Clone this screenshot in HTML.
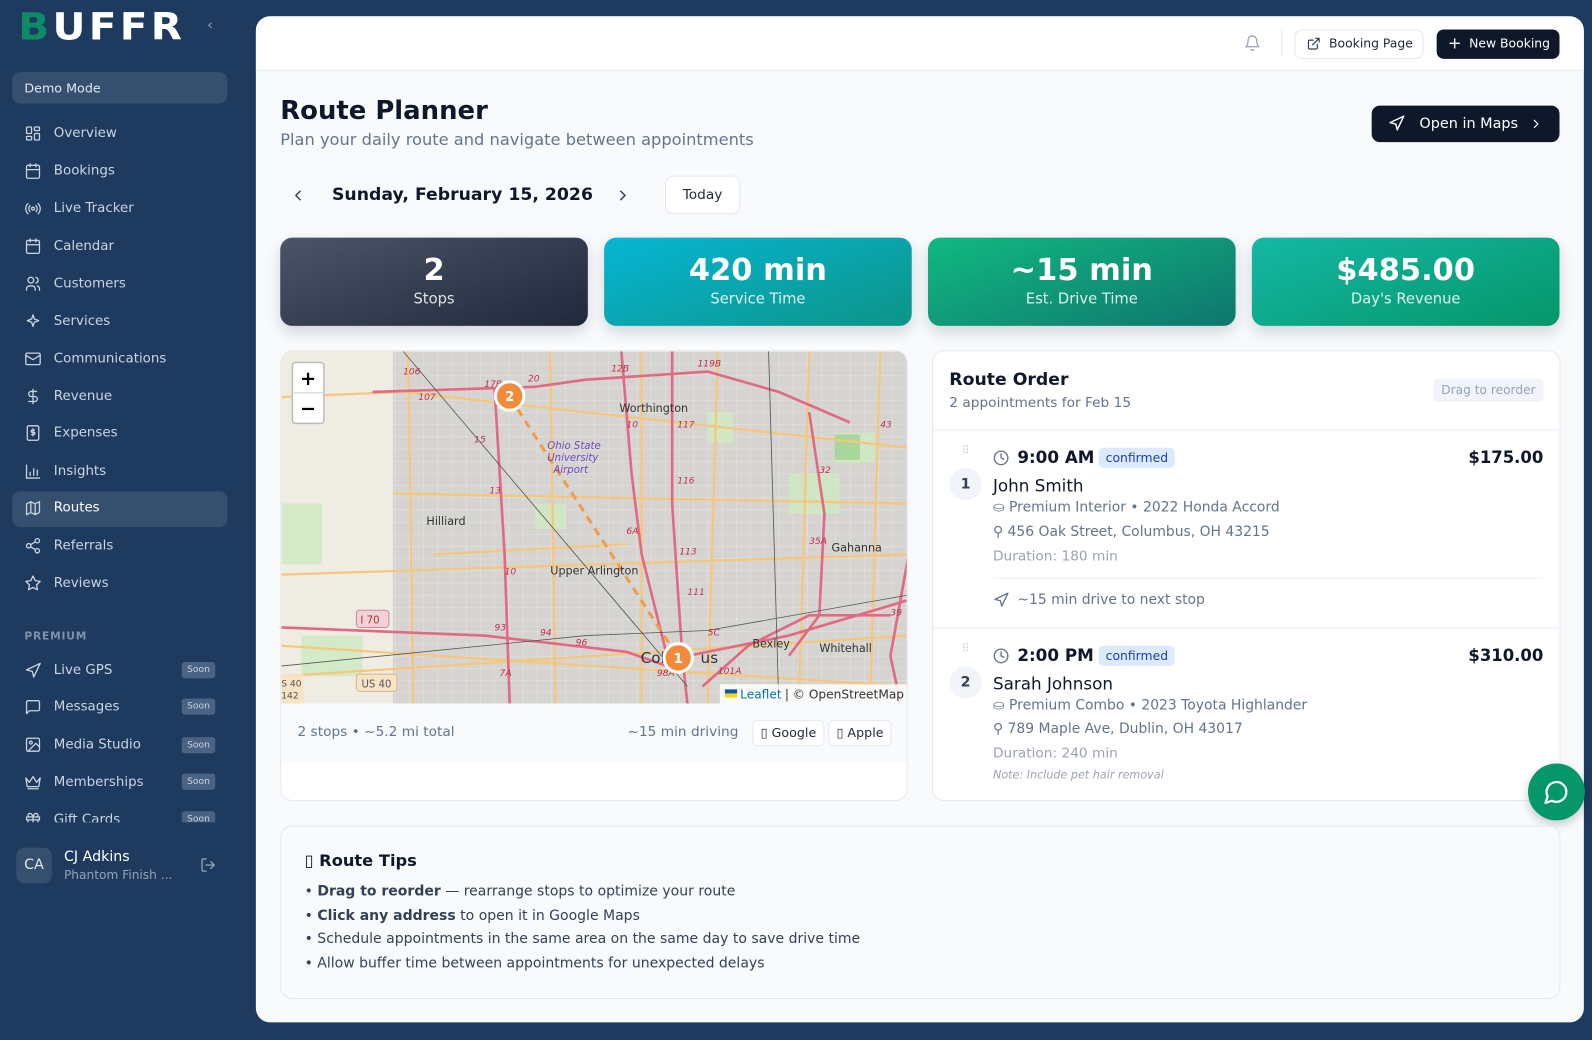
<!DOCTYPE html>
<html><head><meta charset="utf-8"><style>
*{box-sizing:border-box;margin:0;padding:0}
html,body{width:1592px;height:1039px;overflow:hidden;background:#1f3a5f}
body{font-family:"DejaVu Sans","Liberation Sans",sans-serif;}
#root{position:absolute;left:0;top:0;width:1568px;height:1024px;transform:scale(1.0153);transform-origin:0 0;background:#1f3a5f}
.a{position:absolute;white-space:nowrap}
.nav{position:absolute;left:24px;font-size:13.2px;color:#cbd5e1;display:flex;align-items:center}
.nav svg{width:17px;height:17px;margin-right:12px;stroke:#cbd5e1;fill:none;stroke-width:1.8;stroke-linecap:round;stroke-linejoin:round}
.soon{position:absolute;left:179px;width:33px;height:16px;border-radius:3px;background:#4a6283;color:#cbd5e1;font-size:9px;text-align:center;line-height:16px}
.card{position:absolute;border-radius:12px;color:#fff;text-align:center;box-shadow:0 6px 14px rgba(15,23,42,.15)}
.card b{display:block;font-size:30px;margin-top:16px;line-height:34px}
.card span{display:block;font-size:14.5px;opacity:.85;margin-top:3px}
.ico{fill:none;stroke-linecap:round;stroke-linejoin:round}
</style></head><body><div id="root">
<!-- sidebar -->
<div class="a" style="left:18px;top:6px;font-size:37px;font-weight:bold;letter-spacing:3px;transform:scaleX(1.08);transform-origin:0 0;line-height:42px"><span style="color:#0f8a67">B</span><span style="color:#fff">UFFR</span></div>
<div class="a" style="left:204px;top:17px;color:#94a3b8;font-size:14px">‹</div>
<div class="a" style="left:12px;top:71px;width:212px;height:31px;background:#35506f;border-radius:8px;color:#e2e8f0;font-size:12.5px;line-height:31px;padding-left:12px">Demo Mode</div>
<div class="a" style="left:12px;top:484px;width:212px;height:35px;background:#35506f;border-radius:8px"></div>
<div class="nav" style="top:123px"><svg viewBox="0 0 24 24"><rect x="3" y="3" width="7" height="9" rx="1"/><rect x="14" y="3" width="7" height="5" rx="1"/><rect x="14" y="12" width="7" height="9" rx="1"/><rect x="3" y="16" width="7" height="5" rx="1"/></svg>Overview</div>
<div class="nav" style="top:160px"><svg viewBox="0 0 24 24"><rect x="3" y="4" width="18" height="18" rx="2"/><path d="M16 2v4M8 2v4M3 10h18"/></svg>Bookings</div>
<div class="nav" style="top:197px"><svg viewBox="0 0 24 24"><circle cx="12" cy="12" r="2"/><path d="M16.2 7.8a6 6 0 0 1 0 8.4M7.8 16.2a6 6 0 0 1 0-8.4M19.1 4.9a10 10 0 0 1 0 14.2M4.9 19.1a10 10 0 0 1 0-14.2"/></svg>Live Tracker</div>
<div class="nav" style="top:234px"><svg viewBox="0 0 24 24"><rect x="3" y="4" width="18" height="18" rx="2"/><path d="M16 2v4M8 2v4M3 10h18"/></svg>Calendar</div>
<div class="nav" style="top:271px"><svg viewBox="0 0 24 24"><circle cx="9" cy="7" r="4"/><path d="M3 21v-2a4 4 0 0 1 4-4h4a4 4 0 0 1 4 4v2M16 3.1a4 4 0 0 1 0 7.8M21 21v-2a4 4 0 0 0-3-3.9"/></svg>Customers</div>
<div class="nav" style="top:308px"><svg viewBox="0 0 24 24"><path d="M12 3l1.9 5.8L20 11l-6.1 2.2L12 19l-1.9-5.8L4 11l6.1-2.2z"/></svg>Services</div>
<div class="nav" style="top:345px"><svg viewBox="0 0 24 24"><rect x="2" y="4" width="20" height="16" rx="2"/><path d="M22 7l-10 6L2 7"/></svg>Communications</div>
<div class="nav" style="top:382px"><svg viewBox="0 0 24 24"><path d="M12 2v20M17 5H9.5a3.5 3.5 0 0 0 0 7h5a3.5 3.5 0 0 1 0 7H6"/></svg>Revenue</div>
<div class="nav" style="top:418px"><svg viewBox="0 0 24 24"><rect x="4" y="2" width="16" height="20" rx="2"/><path d="M14 8h-3a1.5 1.5 0 0 0 0 3h2a1.5 1.5 0 0 1 0 3h-3M12 6v10"/></svg>Expenses</div>
<div class="nav" style="top:456px"><svg viewBox="0 0 24 24"><path d="M3 3v18h18M8 17v-4M13 17V8M18 17v-7"/></svg>Insights</div>
<div class="nav" style="top:492px;color:#fff"><svg viewBox="0 0 24 24"><path d="M3 6l6-3 6 3 6-3v15l-6 3-6-3-6 3zM9 3v15M15 6v15"/></svg>Routes</div>
<div class="nav" style="top:529px"><svg viewBox="0 0 24 24"><circle cx="18" cy="5" r="3"/><circle cx="6" cy="12" r="3"/><circle cx="18" cy="19" r="3"/><path d="M8.6 13.5l6.8 4M15.4 6.5l-6.8 4"/></svg>Referrals</div>
<div class="nav" style="top:566px"><svg viewBox="0 0 24 24"><path d="M12 2l3.1 6.3 6.9 1-5 4.9 1.2 6.8L12 17.8 5.8 21l1.2-6.8-5-4.9 6.9-1z"/></svg>Reviews</div>
<div class="a" style="left:24px;top:621px;font-size:10.5px;font-weight:bold;color:#7f93ad;letter-spacing:.8px">PREMIUM</div>
<div class="nav" style="top:652px"><svg viewBox="0 0 24 24"><path d="M3 11l19-9-9 19-2-8z"/></svg>Live GPS</div><div class="soon" style="top:652px">Soon</div>
<div class="nav" style="top:688px"><svg viewBox="0 0 24 24"><path d="M21 15a2 2 0 0 1-2 2H7l-4 4V5a2 2 0 0 1 2-2h14a2 2 0 0 1 2 2z"/></svg>Messages</div><div class="soon" style="top:688px">Soon</div>
<div class="nav" style="top:725px"><svg viewBox="0 0 24 24"><rect x="3" y="3" width="18" height="18" rx="2"/><circle cx="9" cy="9" r="2"/><path d="M21 15l-5-5L5 21"/></svg>Media Studio</div><div class="soon" style="top:726px">Soon</div>
<div class="nav" style="top:762px"><svg viewBox="0 0 24 24"><path d="M2 6l5 6 5-8 5 8 5-6-2 12H4zM5 21h14"/></svg>Memberships</div><div class="soon" style="top:762px">Soon</div>
<div style="position:absolute;left:0;top:790px;width:252px;height:20px;overflow:hidden">
<div class="nav" style="top:9px"><svg viewBox="0 0 24 24"><rect x="3" y="8" width="18" height="4"/><path d="M12 8v13M19 12v9H5v-9M7.5 8a2.5 2.5 0 0 1 0-5C11 3 12 8 12 8s1-5 4.5-5a2.5 2.5 0 0 1 0 5"/></svg>Gift Cards</div><div class="soon" style="top:9px">Soon</div></div>
<div class="a" style="left:16px;top:835px;width:35px;height:35px;border-radius:8px;background:#35506f;color:#e2e8f0;font-size:14px;text-align:center;line-height:35px">CA</div>
<div class="a" style="left:63px;top:836px;font-size:14px;color:#fff">CJ Adkins</div>
<div class="a" style="left:63px;top:855px;font-size:12px;color:#94a3b8">Phantom Finish ...</div>
<svg class="a ico" style="left:197px;top:844px" width="16" height="16" viewBox="0 0 24 24" stroke="#94a3b8" stroke-width="2"><path d="M9 21H5a2 2 0 0 1-2-2V5a2 2 0 0 1 2-2h4M16 17l5-5-5-5M21 12H9"/></svg>

<!-- main -->
<div class="a" style="left:252px;top:16px;width:1308px;height:991px;background:#f8fafc;border-radius:14px;overflow:hidden">
 <div style="position:absolute;left:0;top:0;width:100%;height:54px;background:#fff;border-bottom:1px solid #e8edf3"></div>
</div>
<svg class="a ico" style="left:1225px;top:34px" width="17" height="17" viewBox="0 0 24 24" stroke="#94a3b8" stroke-width="1.8"><path d="M18 8A6 6 0 0 0 6 8c0 7-3 9-3 9h18s-3-2-3-9M13.7 21a2 2 0 0 1-3.4 0"/></svg>
<div class="a" style="left:1262px;top:30px;width:1px;height:26px;background:#e5e7eb"></div>
<div class="a" style="left:1275px;top:29px;width:127px;height:29px;border:1px solid #e2e8f0;border-radius:7px;background:#fff;font-size:12.2px;color:#1e293b;line-height:27px;padding-left:33px">Booking Page</div>
<svg class="a ico" style="left:1287px;top:36px" width="14" height="14" viewBox="0 0 24 24" stroke="#334155" stroke-width="2"><path d="M18 13v6a2 2 0 0 1-2 2H5a2 2 0 0 1-2-2V8a2 2 0 0 1 2-2h6M15 3h6v6M10 14L21 3"/></svg>
<div class="a" style="left:1415px;top:29px;width:121px;height:29px;border-radius:7px;background:#0f172a;color:#fff;font-size:12.2px;line-height:29px;padding-left:32px">New Booking</div>
<div class="a" style="left:1426px;top:34px;color:#fff;font-size:16px;line-height:18px">+</div>

<div class="a" style="left:276px;top:94px;font-size:25.5px;font-weight:bold;color:#0f172a">Route Planner</div>
<div class="a" style="left:276px;top:128px;font-size:16px;color:#64748b">Plan your daily route and navigate between appointments</div>
<div class="a" style="left:1351px;top:104px;width:185px;height:36px;border-radius:8px;background:#0f172a;color:#fff;font-size:14.2px;line-height:36px;padding-left:47px">Open in Maps</div>
<svg class="a ico" style="left:1367px;top:113px" width="17" height="17" viewBox="0 0 24 24" stroke="#fff" stroke-width="2"><path d="M3 11l19-9-9 19-2-8z"/></svg>
<svg class="a ico" style="left:1506px;top:115px" width="14" height="14" viewBox="0 0 24 24" stroke="#fff" stroke-width="2"><path d="M9 18l6-6-6-6"/></svg>

<svg class="a ico" style="left:285px;top:184px" width="17" height="17" viewBox="0 0 24 24" stroke="#334155" stroke-width="2"><path d="M15 18l-6-6 6-6"/></svg>
<div class="a" style="left:327px;top:182px;font-size:17px;font-weight:bold;color:#0f172a">Sunday, February 15, 2026</div>
<svg class="a ico" style="left:605px;top:184px" width="17" height="17" viewBox="0 0 24 24" stroke="#334155" stroke-width="2"><path d="M9 18l6-6-6-6"/></svg>
<div class="a" style="left:655px;top:173px;width:74px;height:38px;border:1px solid #e2e8f0;border-radius:8px;background:#fff;font-size:13.5px;color:#1e293b;text-align:center;line-height:36px">Today</div>

<div class="card" style="left:276px;top:234px;width:303px;height:87px;background:linear-gradient(160deg,#4b5567,#1f293b)"><b>2</b><span>Stops</span></div>
<div class="card" style="left:595px;top:234px;width:303px;height:87px;background:linear-gradient(160deg,#06b6d4,#0d9488)"><b>420 min</b><span>Service Time</span></div>
<div class="card" style="left:914px;top:234px;width:303px;height:87px;background:linear-gradient(160deg,#10b981,#0f766e)"><b>~15 min</b><span>Est. Drive Time</span></div>
<div class="card" style="left:1233px;top:234px;width:303px;height:87px;background:linear-gradient(160deg,#14b8a6,#059669)"><b>$485.00</b><span>Day's Revenue</span></div>

<!-- map card -->
<div class="a" style="left:276px;top:345px;width:618px;height:444px;background:#fff;border:1px solid #e5e9ef;border-radius:12px;overflow:hidden">
<svg width="618" height="347" viewBox="0 0 618 347" style="display:block">
<defs><pattern id="st" width="14" height="12" patternUnits="userSpaceOnUse"><path d="M0 0H14M0 0V12" stroke="#eeece8" stroke-width="1" fill="none"/></pattern></defs>
<rect width="618" height="347" fill="#e8e6e0"/>
<rect x="0" y="0" width="110" height="347" fill="#efece4"/>
<rect x="110" y="0" width="508" height="347" fill="#d6d4d1"/>
<rect x="110" y="0" width="508" height="347" fill="url(#st)" opacity=".7"/>
<g fill="#cfe9c2" opacity=".85"><rect x="545" y="80" width="40" height="30"/><rect x="20" y="280" width="60" height="40"/><rect x="0" y="150" width="40" height="60"/><rect x="500" y="120" width="50" height="40"/><rect x="250" y="150" width="30" height="25"/><rect x="420" y="60" width="25" height="30"/></g>
<rect x="545" y="82" width="25" height="25" fill="#a9d69a"/>
<g stroke="#f6c77a" stroke-width="2.2" fill="none">
<path d="M0 45 L120 40 L300 60 L618 95"/><path d="M110 140 L618 150"/><path d="M0 220 L618 200"/><path d="M0 320 L618 280"/>
<path d="M125 0 L130 347"/><path d="M265 0 L270 347"/><path d="M355 0 L355 347"/><path d="M430 0 L420 347"/><path d="M520 0 L510 347"/><path d="M590 0 L580 347"/><path d="M150 200 L340 190"/><path d="M0 290 L618 330"/>
</g>
<g stroke="#e06a84" stroke-width="2.6" fill="none">
<path d="M0 272 L200 280 L340 296 L380 310"/><path d="M90 40 L250 35 L300 28 L420 20 L490 40 L560 70"/>
<path d="M210 35 L220 200 L225 347"/><path d="M335 0 L345 120 L355 200 L380 300"/><path d="M385 0 L385 150 L395 300 L400 347"/>
<path d="M415 330 L460 290 L520 260 L600 260"/><path d="M520 60 L535 160 L530 260 L500 300"/><path d="M618 200 L600 300 L610 347"/><path d="M400 300 L500 280 L618 245"/>
</g>
<g stroke="#555" stroke-width=".8" fill="none"><path d="M0 310 L300 280 L420 275 L618 240"/><path d="M120 0 L400 330"/><path d="M480 0 L490 347"/></g>
<path d="M225 45 L390 300" stroke="#f39a4a" stroke-width="3" stroke-dasharray="8 6" fill="none"/>
<g font-family="DejaVu Sans" font-size="11" fill="#333">
<text x="333" y="60">Worthington</text><text x="143" y="171">Hilliard</text><text x="265" y="220">Upper Arlington</text><text x="542" y="197">Gahanna</text><text x="464" y="292">Bexley</text><text x="530" y="296">Whitehall</text>
<text x="354" y="307" font-size="15">Col</text><text x="413" y="307" font-size="15">us</text>
<text x="262" y="96" fill="#7048c0" font-style="italic" font-size="10">Ohio State</text><text x="262" y="108" fill="#7048c0" font-style="italic" font-size="10">University</text><text x="268" y="120" fill="#7048c0" font-style="italic" font-size="10">Airport</text>
</g>
<g font-family="DejaVu Sans" font-size="9" fill="#c0304f" font-style="italic">
<text x="120" y="23">106</text><text x="135" y="48">107</text><text x="200" y="35">17B</text><text x="243" y="30">20</text><text x="325" y="20">12B</text><text x="410" y="15">119B</text><text x="190" y="90">15</text><text x="340" y="75">10</text><text x="390" y="75">117</text><text x="205" y="140">13</text><text x="340" y="180">6A</text><text x="390" y="130">116</text><text x="392" y="200">113</text><text x="400" y="240">111</text><text x="220" y="220">10</text><text x="210" y="275">93</text><text x="255" y="280">94</text><text x="290" y="290">96</text><text x="530" y="120">32</text><text x="590" y="75">43</text><text x="520" y="190">35A</text><text x="600" y="260">39</text><text x="420" y="280">5C</text><text x="370" y="320">98A</text><text x="430" y="318">101A</text><text x="215" y="320">7A</text>
</g>
<rect x="74" y="255" width="32" height="17" rx="3" fill="#f2d2d6" stroke="#d08a96"/><text x="78" y="268" font-family="DejaVu Sans" font-size="10" fill="#a33">I 70</text>
<rect x="74" y="318" width="40" height="17" rx="3" fill="#f7e3c5" stroke="#d6b585"/><text x="79" y="331" font-family="DejaVu Sans" font-size="10" fill="#555">US 40</text>
<rect x="0" y="318" width="22" height="29" fill="#f7e3c5"/><text x="0" y="330" font-family="DejaVu Sans" font-size="9" fill="#555">S 40</text><text x="0" y="342" font-family="DejaVu Sans" font-size="9" fill="#555">142</text>
<g><circle cx="225" cy="44" r="14" fill="#f28c3a" stroke="#fff" stroke-width="3"/><text x="225" y="49" text-anchor="middle" font-family="DejaVu Sans" font-weight="bold" font-size="13" fill="#fff">2</text></g>
<g><circle cx="391" cy="302" r="14" fill="#f28c3a" stroke="#fff" stroke-width="3"/><text x="391" y="307" text-anchor="middle" font-family="DejaVu Sans" font-weight="bold" font-size="13" fill="#fff">1</text></g>
<rect x="11" y="11" width="31" height="60" rx="3" fill="#fff" stroke="#bbb" stroke-width="1.5"/><line x1="11" y1="41" x2="42" y2="41" stroke="#ccc"/>
<text x="26.5" y="33" text-anchor="middle" font-family="DejaVu Sans" font-weight="bold" font-size="19" fill="#000">+</text><text x="26.5" y="63" text-anchor="middle" font-family="DejaVu Sans" font-weight="bold" font-size="19" fill="#000">−</text>
<rect x="432" y="328" width="186" height="19" fill="rgba(255,255,255,.85)"/>
<rect x="437" y="333" width="12" height="4" fill="#0057b7"/><rect x="437" y="337" width="12" height="4" fill="#ffd700"/>
<text x="452" y="342" font-family="DejaVu Sans" font-size="12" fill="#0078a8">Leaflet</text><text x="496" y="342" font-family="DejaVu Sans" font-size="12" fill="#333">| © OpenStreetMap</text>
</svg>
<div style="position:absolute;left:0;top:347px;width:100%;height:58px;background:#f8fafc"></div>
<div class="a" style="left:16px;top:367px;font-size:13.5px;color:#64748b">2 stops • ~5.2 mi total</div>
<div class="a" style="left:341px;top:367px;font-size:13.5px;color:#64748b">~15 min driving</div>
<div class="a" style="left:464px;top:363px;width:71px;height:26px;border:1px solid #e2e8f0;border-radius:5px;background:#fff;font-size:12.5px;color:#1e293b;text-align:center;line-height:24px">▯ Google</div>
<div class="a" style="left:539px;top:363px;width:62px;height:26px;border:1px solid #e2e8f0;border-radius:5px;background:#fff;font-size:12.5px;color:#1e293b;text-align:center;line-height:24px">▯ Apple</div>
</div>

<!-- route order -->
<div class="a" style="left:918px;top:345px;width:619px;height:444px;background:#fff;border:1px solid #e5e9ef;border-radius:12px;overflow:hidden">
<div class="a" style="left:16px;top:18px;font-size:17px;font-weight:bold;color:#0f172a">Route Order</div>
<div class="a" style="left:16px;top:43px;font-size:13.5px;color:#64748b">2 appointments for Feb 15</div>
<div class="a" style="left:493px;top:27px;width:108px;height:23px;background:#f1f5f9;border-radius:4px;font-size:12px;color:#94a3b8;text-align:center;line-height:23px">Drag to reorder</div>
<div class="a" style="left:0;top:77px;width:100%;height:1px;background:#e8edf3"></div>
<!-- item1 -->
<div class="a" style="left:28px;top:95px;color:#cbd5e1;font-size:11px;line-height:5px;letter-spacing:1px">⠿</div>
<div class="a" style="left:16px;top:115px;width:32px;height:32px;border-radius:50%;background:#f1f5f9;font-size:14px;font-weight:bold;color:#334155;text-align:center;line-height:32px">1</div>
<svg class="a ico" style="left:59px;top:97px" width="16" height="16" viewBox="0 0 24 24" stroke="#64748b" stroke-width="2"><circle cx="12" cy="12" r="10"/><path d="M12 6v6l4 2"/></svg>
<div class="a" style="left:83px;top:95px;font-size:16.5px;font-weight:bold;color:#0f172a">9:00 AM</div>
<div class="a" style="left:163px;top:95px;height:20px;padding:0 7px;border-radius:5px;background:#dbeafe;color:#1e40af;font-size:12.2px;line-height:20px">confirmed</div>
<div class="a" style="right:16px;top:95px;font-size:16.2px;font-weight:bold;color:#0f172a">$175.00</div>
<div class="a" style="left:59px;top:123px;font-size:16.5px;color:#0f172a">John Smith</div>
<div class="a" style="left:59px;top:146px;font-size:13.7px;color:#64748b">⛀ Premium Interior • 2022 Honda Accord</div>
<div class="a" style="left:59px;top:170px;font-size:13.7px;color:#64748b">⚲ 456 Oak Street, Columbus, OH 43215</div>
<div class="a" style="left:59px;top:194px;font-size:13.5px;color:#9ca3af">Duration: 180 min</div>
<div class="a" style="left:59px;top:223px;width:542px;height:1px;background:#e8edf3"></div>
<svg class="a ico" style="left:59px;top:237px" width="16" height="16" viewBox="0 0 24 24" stroke="#64748b" stroke-width="2"><path d="M3 11l19-9-9 19-2-8z"/></svg>
<div class="a" style="left:83px;top:237px;font-size:13.7px;color:#64748b">~15 min drive to next stop</div>
<div class="a" style="left:0;top:272px;width:100%;height:1px;background:#e8edf3"></div>
<!-- item2 -->
<div class="a" style="left:28px;top:290px;color:#cbd5e1;font-size:11px;line-height:5px;letter-spacing:1px">⠿</div>
<div class="a" style="left:16px;top:310px;width:32px;height:32px;border-radius:50%;background:#f1f5f9;font-size:14px;font-weight:bold;color:#334155;text-align:center;line-height:32px">2</div>
<svg class="a ico" style="left:59px;top:292px" width="16" height="16" viewBox="0 0 24 24" stroke="#64748b" stroke-width="2"><circle cx="12" cy="12" r="10"/><path d="M12 6v6l4 2"/></svg>
<div class="a" style="left:83px;top:290px;font-size:16.5px;font-weight:bold;color:#0f172a">2:00 PM</div>
<div class="a" style="left:163px;top:290px;height:20px;padding:0 7px;border-radius:5px;background:#dbeafe;color:#1e40af;font-size:12.2px;line-height:20px">confirmed</div>
<div class="a" style="right:16px;top:290px;font-size:16.2px;font-weight:bold;color:#0f172a">$310.00</div>
<div class="a" style="left:59px;top:318px;font-size:16.5px;color:#0f172a">Sarah Johnson</div>
<div class="a" style="left:59px;top:341px;font-size:13.7px;color:#64748b">⛀ Premium Combo • 2023 Toyota Highlander</div>
<div class="a" style="left:59px;top:364px;font-size:13.7px;color:#64748b">⚲ 789 Maple Ave, Dublin, OH 43017</div>
<div class="a" style="left:59px;top:388px;font-size:13.5px;color:#9ca3af">Duration: 240 min</div>
<div class="a" style="left:59px;top:411px;font-size:11px;color:#9ca3af;font-style:italic">Note: Include pet hair removal</div>
</div>
<div class="a" style="left:1505px;top:752px;width:56px;height:56px;border-radius:50%;background:#059669;box-shadow:0 4px 10px rgba(0,0,0,.2)"></div>
<svg class="a ico" style="left:1520px;top:767px" width="26" height="26" viewBox="0 0 24 24" stroke="#fff" stroke-width="2"><path d="M7.9 20A9 9 0 1 0 4 16.1L2 22z"/></svg>

<!-- tips -->
<div class="a" style="left:276px;top:813px;width:1261px;height:171px;background:#f8fafc;border:1px solid #e5e9ef;border-radius:12px"></div>
<div class="a" style="left:300px;top:838px;font-size:16px;font-weight:bold;color:#0f172a">▯ Route Tips</div>
<div class="a" style="left:300px;top:867px;font-size:13.8px;color:#334155;line-height:23.6px">• <b>Drag to reorder</b> — rearrange stops to optimize your route<br>• <b>Click any address</b> to open it in Google Maps<br>• Schedule appointments in the same area on the same day to save drive time<br>• Allow buffer time between appointments for unexpected delays</div>
</div></body></html>
